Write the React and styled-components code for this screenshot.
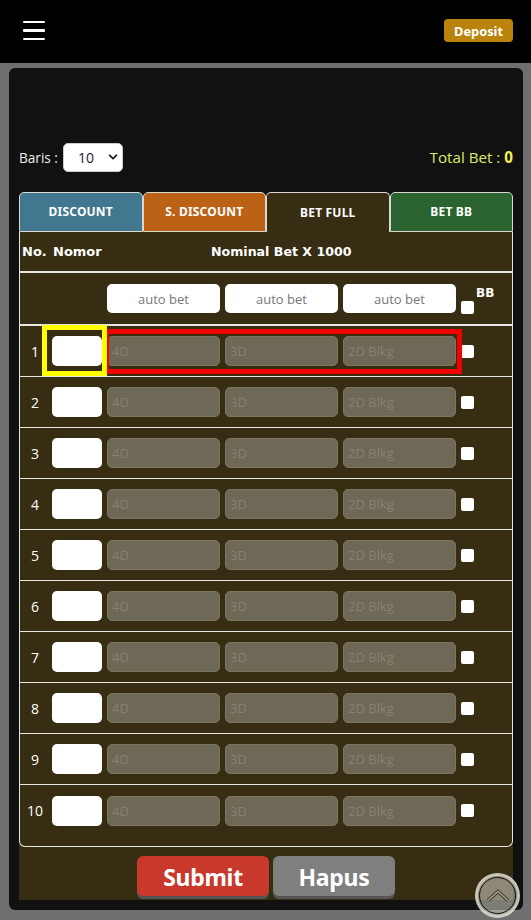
import React from 'react';
import styled, { createGlobalStyle } from 'styled-components';
import { FaChevronDown } from 'react-icons/fa';

const GlobalStyle = createGlobalStyle`
  html, body {
    margin: 0;
    padding: 0;
    background: #6f6f6f;
    height: 920px;
    overflow: hidden;
    font-family: "Open Sans", "Noto Sans", sans-serif;
  }
  * { box-sizing: border-box; }
`;

const Page = styled.div`
  position: relative;
  height: 920px;
  overflow: hidden;
`;

const Header = styled.header`
  height: 63px;
  background: #000;
  display: flex;
  align-items: center;
  justify-content: space-between;
  padding: 0 18px 2px 23px;
`;

const Burger = styled.div`
  width: 22px;
  display: flex;
  flex-direction: column;
  gap: 6px;
  span {
    display: block;
    height: 2.5px;
    background: #fff;
    border-radius: 1px;
  }
`;

const Deposit = styled.button`
  width: 69px;
  height: 23px;
  background: #b9830c;
  border: 0;
  border-radius: 4px;
  color: #fff;
  font: 700 12.8px "Noto Sans", sans-serif;
  padding: 0;
`;

const Card = styled.main`
  margin: 5px 8px 0 9px;
  height: 842px;
  background: #111;
  border-radius: 6px;
  padding: 74px 10px 10px;
`;

const TopRow = styled.div`
  display: flex;
  align-items: center;
  justify-content: space-between;
  height: 30px;
`;

const Baris = styled.label`
  display: flex;
  align-items: center;
  gap: 5px;
  color: #eee;
  font-size: 13.6px;
`;

const Select = styled.div`
  width: 60px;
  height: 29px;
  background: #fff;
  border-radius: 5px;
  border: 1px solid #ccc;
  color: #223;
  font-size: 14px;
  display: flex;
  align-items: center;
  justify-content: space-between;
  padding: 0 4px 0 14px;
`;

const Total = styled.div`
  color: #dfe96a;
  font-size: 15.2px;
  b { color: #f2f25a; }
`;

const Tabs = styled.div`
  display: flex;
  margin-top: 20px;
  height: 40px;
`;

const Tab = styled.div`
  flex: 1;
  background: ${p => p.$bg};
  border: 1px solid #d9d9d0;
  border-bottom: ${p => (p.$active ? '0' : '1px solid #d9d9d0')};
  border-radius: 5px 5px 0 0;
  color: #fff;
  font: 700 12px "Noto Sans", sans-serif;
  letter-spacing: 0.2px;
  display: flex;
  align-items: center;
  justify-content: center;
  padding-bottom: ${p => (p.$active ? '0' : '2px')};
`;

const Brown = styled.div`
  background: #372d12;
  height: 668px;
`;

const Table = styled.div`
  border: 1px solid #e6e6e0;
  border-top: 0;
  border-radius: 0 0 6px 6px;
  height: 615px;
`;

const HeadRow = styled.div`
  height: 41px;
  display: flex;
  align-items: center;
  color: #fff;
  font: 700 13px "DejaVu Sans", sans-serif;
  border-bottom: 2px solid #e6e6e0;
`;

const HeadNo = styled.span`
  margin-left: 2px;
  width: 31px;
`;

const HeadNomor = styled.span`
  width: 158px;
`;

const HeadBet = styled.span`
  font-size: 12.6px;
`;

const AutoRow = styled.div`
  height: 53px;
  display: flex;
  align-items: center;
  padding-left: 87px;
  border-bottom: 2px solid #e6e6e0;
  gap: 5px;
`;

const AutoInput = styled.div`
  width: 113px;
  height: 29px;
  background: #fff;
  border-radius: 5px;
  color: #777;
  font-size: 13px;
  display: flex;
  align-items: center;
  justify-content: center;
`;

const BBCell = styled.div`
  position: relative;
  width: 20px;
  height: 100%;
  span {
    position: absolute;
    left: 15px;
    top: 13px;
    color: #fff;
    font: 700 12px "DejaVu Sans", sans-serif;
  }
`;

const Check = styled.div`
  width: 13px;
  height: 13px;
  background: #fff;
  border-radius: 2px;
  flex: none;
`;

const BBCheck = styled(Check)`
  position: absolute;
  top: 28px;
`;

const Row = styled.div`
  position: relative;
  height: 51px;
  display: flex;
  align-items: center;
  border-bottom: ${p => (p.$last ? '0' : '1px solid #e6e6e0')};
  gap: 5px;
`;

const RowNo = styled.span`
  width: 27px;
  color: #fff;
  font-size: 14px;
  text-align: center;
  padding-left: 3px;
`;

const NumInput = styled.div`
  width: 50px;
  height: 30px;
  background: #fff;
  border-radius: 5px;
`;

const BetInput = styled.div`
  width: 113px;
  height: 30px;
  background: #6e6856;
  border: 1px solid #7b765f;
  border-radius: 5px;
  color: #878170;
  font-size: 13px;
  display: flex;
  align-items: center;
  padding-left: 4px;
`;

const YellowBox = styled.div`
  position: absolute;
  left: 22px;
  top: -1px;
  width: 65px;
  height: 51px;
  border: 5px solid #ffff00;
`;

const RedBox = styled.div`
  position: absolute;
  left: 87px;
  top: 3px;
  width: 355px;
  height: 45px;
  border: 5px solid #f20000;
  border-left-width: 2px;
`;

const Actions = styled.div`
  display: flex;
  justify-content: center;
  gap: 4px;
  padding-top: 9px;
`;

const ActionBtn = styled.button`
  width: ${p => p.$w}px;
  height: 40px;
  background: ${p => p.$bg};
  border: 0;
  border-radius: 6px;
  box-shadow: 0 3px 0 #555;
  color: #fff;
  font: 700 23px "Noto Sans", sans-serif;
  letter-spacing: -0.3px;
  padding: 2px 0 0;
`;

const ScrollTop = styled.div`
  position: absolute;
  left: 475px;
  top: 873px;
  width: 45px;
  height: 45px;
  border-radius: 50%;
  background: rgba(200, 198, 185, 0.6);
  border: 3px solid rgba(225, 225, 215, 0.7);
  display: flex;
  align-items: center;
  justify-content: center;
  &::after {
    content: '';
    position: absolute;
    inset: 1px;
    border: 1.5px solid #111;
    border-radius: 50%;
  }
`;

const rows = Array.from({ length: 10 }, (_, i) => i + 1);

const App = () => {
  return (
    <Page>
      <GlobalStyle />
      <Header>
        <Burger><span /><span /><span /></Burger>
        <Deposit>Deposit</Deposit>
      </Header>
      <Card>
        <TopRow>
          <Baris>
            Baris :
            <Select>10 <FaChevronDown size={10} color="#111" /></Select>
          </Baris>
          <Total>Total Bet : <b>0</b></Total>
        </TopRow>
        <Tabs>
          <Tab $bg="#41788f">DISCOUNT</Tab>
          <Tab $bg="#bb6217">S. DISCOUNT</Tab>
          <Tab $bg="#372d12" $active>BET FULL</Tab>
          <Tab $bg="#2a6230">BET BB</Tab>
        </Tabs>
        <Brown>
          <Table>
            <HeadRow>
              <HeadNo>No.</HeadNo>
              <HeadNomor>Nomor</HeadNomor>
              <HeadBet>Nominal Bet X 1000</HeadBet>
            </HeadRow>
            <AutoRow>
              <AutoInput>auto bet</AutoInput>
              <AutoInput>auto bet</AutoInput>
              <AutoInput>auto bet</AutoInput>
              <BBCell>
                <BBCheck />
                <span>BB</span>
              </BBCell>
            </AutoRow>
            {rows.map(n => (
              <Row key={n} $last={n === 10}>
                <RowNo>{n}</RowNo>
                <NumInput />
                <BetInput>4D</BetInput>
                <BetInput>3D</BetInput>
                <BetInput>2D Blkg</BetInput>
                <Check />
                {n === 1 && <YellowBox />}
                {n === 1 && <RedBox />}
              </Row>
            ))}
          </Table>
          <Actions>
            <ActionBtn $w={132} $bg="#c8392b">Submit</ActionBtn>
            <ActionBtn $w={122} $bg="#7f7f7f">Hapus</ActionBtn>
          </Actions>
        </Brown>
      </Card>
      <ScrollTop>
        <svg width="24" height="15" viewBox="0 0 24 15" fill="none" strokeLinejoin="miter">
          <path d="M2 12.5 L12 3.5 L22 12.5" stroke="#3e3a2c" strokeWidth="3.4" />
          <path d="M2 12.5 L12 3.5 L22 12.5" stroke="#a9a595" strokeWidth="1.4" />
        </svg>
      </ScrollTop>
    </Page>
  );
};

export default App;
